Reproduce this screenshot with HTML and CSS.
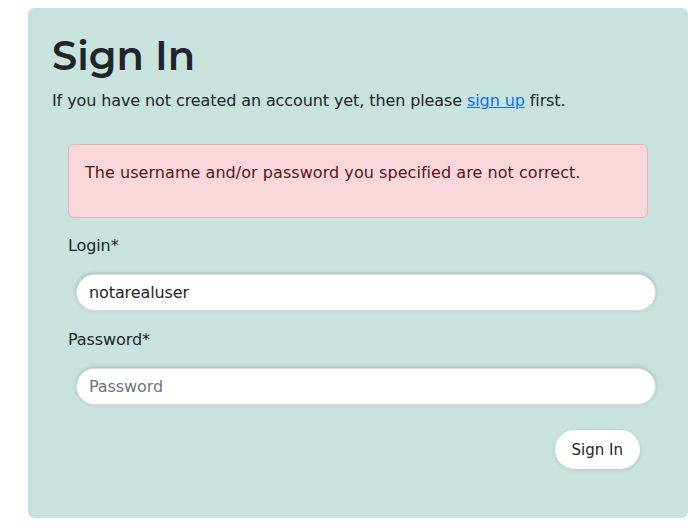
FILE: index.html
```html
<!DOCTYPE html>
<html>
<head>
<meta charset="utf-8">
<link rel="stylesheet" href="styles.css">
</head>
<body>
<div class="card">
  <h1 class="title">Sign In</h1>
  <p class="intro">If you have not created an account yet, then please <a href="#">sign up</a> first.</p>
  <form class="form">
    <div class="alert"><p>The username and/or password you specified are not correct.</p></div>
    <label class="label">Login*</label>
    <div class="field"><input class="input" type="text" value="notarealuser"></div>
    <label class="label">Password*</label>
    <div class="field"><input class="input" type="password" placeholder="Password"></div>
    <div class="actions"><button class="btn" type="button">Sign In</button></div>
  </form>
</div>
</body>
</html>
```
FILE: styles.css
```css
* { box-sizing: border-box; }
body {
  margin: 8px 11px 0 28px;
  font-family: "DejaVu Sans", sans-serif;
  color: #212529;
  background: #fff;
}
.card {
  background: #c8e3de;
  border-radius: 6px;
  padding: 24px 24px 48px 24px;
  min-height: 510px;
}
.title {
  font-family: "Montserrat", "Inter", sans-serif;
  font-weight: 600;
  font-size: 40px;
  line-height: 48px;
  margin: 0 0 9px 0;
}
.intro {
  font-size: 16px;
  line-height: 24px;
  margin: 0 0 31px 0;
  letter-spacing: -0.1px;
}
.intro a { color: #0d6efd; }
.form { margin: 0 16px; display: flex; flex-direction: column; }
.alert {
  background: #f8d7da;
  border: 1px solid #f1aeb5;
  color: #58151c;
  border-radius: 6px;
  padding: 16px 16px 0 16px;
  margin-bottom: 16px;
}
.alert p { margin: 0 0 32px 0; font-size: 16px; line-height: 24px; letter-spacing: 0.05px; }
.label { font-size: 16px; line-height: 24px; margin-bottom: 16px; letter-spacing: -0.1px; }
.field { padding-left: 8px; margin-right: -8px; margin-bottom: 17px; }
.input {
  width: 100%;
  height: 37px;
  border: 1px solid #d6dcdb;
  border-radius: 20px;
  background: #fff;
  padding: 0 12px;
  font-family: "DejaVu Sans", sans-serif;
  font-size: 16px;
  letter-spacing: -0.1px;
  color: #212529;
  box-shadow: 0 -1px 4px rgba(0,0,0,0.18);
  outline: none;
}
.input::placeholder { color: #6c757d; }
.actions { display: flex; justify-content: flex-end; padding-top: 8px; padding-right: 8px; }
.btn {
  background: #fff;
  border: none;
  border-radius: 20px;
  height: 39px;
  padding: 0 17px;
  font-family: "DejaVu Sans", sans-serif;
  font-size: 15px;
  color: #212529;
  box-shadow: 0 1px 4px rgba(0,0,0,0.12);
}
```
